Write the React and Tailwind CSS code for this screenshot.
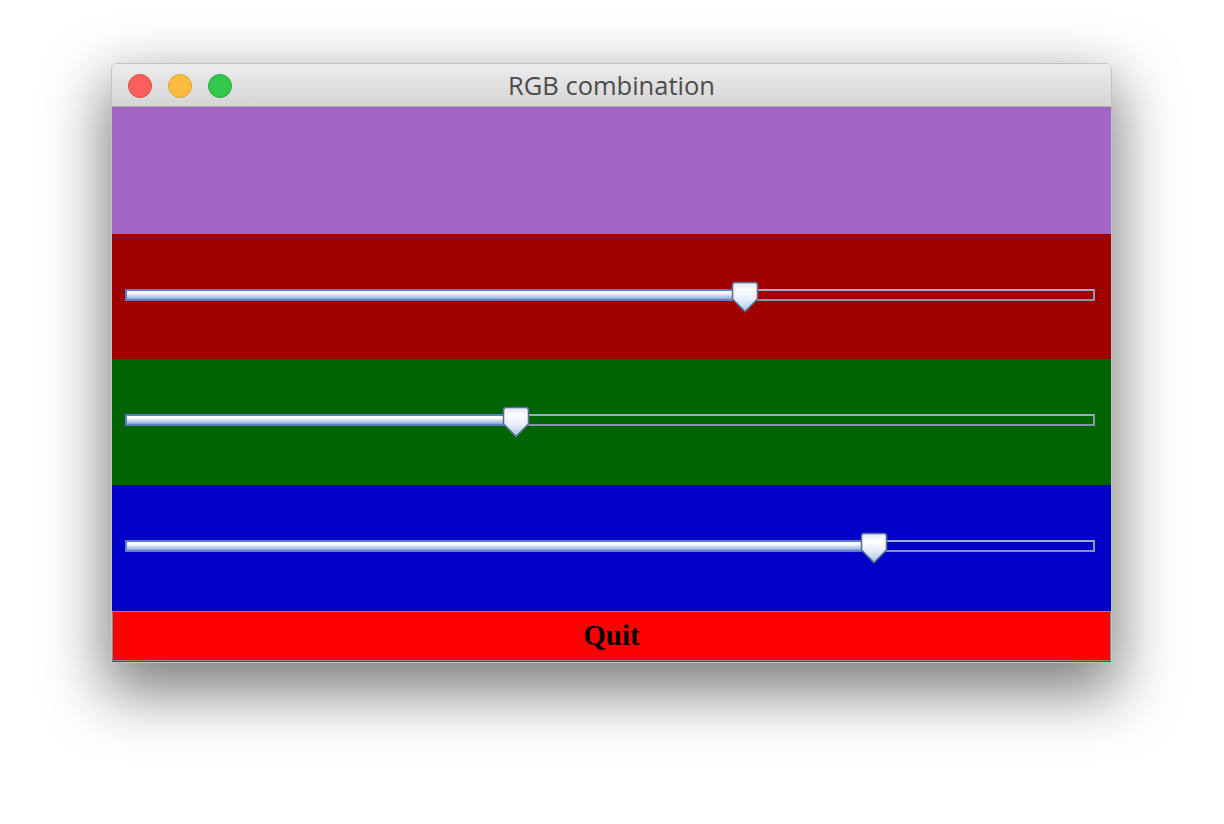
import React, { useState } from 'react';

const TRACK_START = 13;
const TRACK_W = 970;
const THUMB_W = 28;

function Thumb() {
  return (
    <svg width="28" height="32" viewBox="0 0 28 32" className="block">
      <defs>
        <linearGradient id="thumbFill" x1="0" y1="0" x2="0" y2="1">
          <stop offset="0" stopColor="#d9e6f7" />
          <stop offset="0.25" stopColor="#ffffff" />
          <stop offset="0.6" stopColor="#e4edf9" />
          <stop offset="1" stopColor="#a9c2e6" />
        </linearGradient>
      </defs>
      <path
        d="M1.5 4 Q1.5 1.5 4 1.5 H24 Q26.5 1.5 26.5 4 V18 L14 30.5 L1.5 18 Z"
        fill="url(#thumbFill)"
        stroke="#5a6f92"
        strokeWidth="1.6"
      />
    </svg>
  );
}

function Slider({ value, max = 255 }) {
  const travel = TRACK_W - THUMB_W;
  const left = Math.round((value / max) * travel);
  return (
    <div className="relative h-[32px]" style={{ marginLeft: TRACK_START, width: TRACK_W }}>
      {/* empty track */}
      <div className="absolute left-0 right-0 top-[8px] h-[12px] border-y-2 border-x-2 border-t-[#9aaec8] border-b-[#8494aa] border-x-[#8a9ab0]" />
      {/* filled track */}
      <div
        className="absolute left-0 top-[8px] h-[12px] border-2 border-[#5f7fc4] bg-[linear-gradient(#ffffff_0%,#ffffff_25%,#dbe6f5_45%,#b9cce8_70%,#8ea8d2_100%)]"
        style={{ width: left + THUMB_W / 2 }}
      />
      <div className="absolute top-0" style={{ left }}>
        <Thumb />
      </div>
    </div>
  );
}

export default function App() {
  const [r] = useState(164);
  const [g] = useState(102);
  const [b] = useState(199);

  return (
    <div className="min-h-[824px] w-[1224px] bg-white pt-[63px] pl-[111px]">
      <div className="w-[1001px] rounded-t-[6px] overflow-hidden border border-[#c3c3c3] shadow-[0_24px_60px_6px_rgba(0,0,0,0.5)]">
        {/* title bar */}
        <div className="relative h-[43px] flex items-center justify-center bg-[linear-gradient(#ececec,#d5d5d5)] border-b border-[#b1b1b1]">
          <div className="absolute left-[16px] top-[10px] flex gap-[16px]">
            <span className="w-[24px] h-[24px] rounded-full bg-[#fc605c] border border-[#de4a45]" />
            <span className="w-[24px] h-[24px] rounded-full bg-[#fdbc40] border border-[#dea236]" />
            <span className="w-[24px] h-[24px] rounded-full bg-[#34c84a] border border-[#27aa35]" />
          </div>
          <span className="pt-[2px] text-[25.5px] text-[#4c4c4c] font-['Open_Sans','Liberation_Sans',Arial,sans-serif] leading-none">
            RGB combination
          </span>
        </div>

        {/* colour preview */}
        <div className="h-[127px]" style={{ backgroundColor: `rgb(${r - 1},${g},${b})` }} />

        <div className="h-[125px] bg-[#a00000] flex items-center">
          <Slider value={r} />
        </div>
        <div className="h-[126px] bg-[#006400] flex items-center">
          <Slider value={g} />
        </div>
        <div className="h-[126px] bg-[#0000c8] flex items-center">
          <Slider value={b} />
        </div>

        <div className="bg-[#ff0000] pb-[1px]">
          <button className="w-full h-[50px] bg-[#ff0000] border border-[#8a8a8a] flex items-center justify-center font-['Liberation_Serif','Times_New_Roman',serif] font-bold text-[29px] text-black">
            Quit
          </button>
        </div>
      </div>
    </div>
  );
}
